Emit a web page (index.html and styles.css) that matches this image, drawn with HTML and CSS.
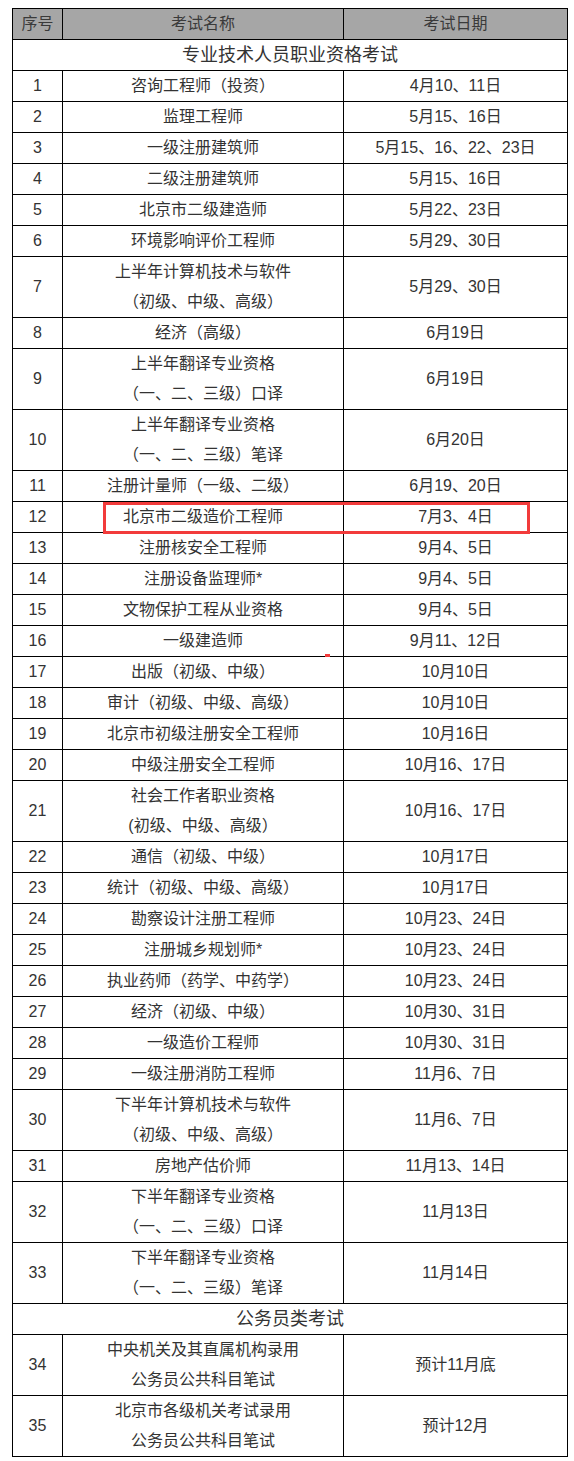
FILE: index.html
```html
<!DOCTYPE html>
<html lang="zh">
<head>
<meta charset="utf-8">
<title>考试日期</title>
<link rel="stylesheet" href="styles.css">
</head>
<body>
<div class="wrap">
<table class="exam">
<colgroup><col class="c1"><col class="c2"><col class="c3"></colgroup>
<thead>
<tr><th>序号</th><th>考试名称</th><th>考试日期</th></tr>
</thead>
<tbody>
<tr class="section"><td colspan="3">专业技术人员职业资格考试</td></tr>
<tr><td>1</td><td>咨询工程师（投资）</td><td>4月10、11日</td></tr>
<tr><td>2</td><td>监理工程师</td><td>5月15、16日</td></tr>
<tr><td>3</td><td>一级注册建筑师</td><td>5月15、16、22、23日</td></tr>
<tr><td>4</td><td>二级注册建筑师</td><td>5月15、16日</td></tr>
<tr><td>5</td><td>北京市二级建造师</td><td>5月22、23日</td></tr>
<tr><td>6</td><td>环境影响评价工程师</td><td>5月29、30日</td></tr>
<tr><td>7</td><td>上半年计算机技术与软件<br>（初级、中级、高级）</td><td>5月29、30日</td></tr>
<tr><td>8</td><td>经济（高级）</td><td>6月19日</td></tr>
<tr><td>9</td><td>上半年翻译专业资格<br>（一、二、三级）口译</td><td>6月19日</td></tr>
<tr><td>10</td><td>上半年翻译专业资格<br>（一、二、三级）笔译</td><td>6月20日</td></tr>
<tr><td>11</td><td>注册计量师（一级、二级）</td><td>6月19、20日</td></tr>
<tr><td>12</td><td>北京市二级造价工程师</td><td>7月3、4日</td></tr>
<tr><td>13</td><td>注册核安全工程师</td><td>9月4、5日</td></tr>
<tr><td>14</td><td>注册设备监理师*</td><td>9月4、5日</td></tr>
<tr><td>15</td><td>文物保护工程从业资格</td><td>9月4、5日</td></tr>
<tr><td>16</td><td>一级建造师</td><td>9月11、12日</td></tr>
<tr><td>17</td><td>出版（初级、中级）</td><td>10月10日</td></tr>
<tr><td>18</td><td>审计（初级、中级、高级）</td><td>10月10日</td></tr>
<tr><td>19</td><td>北京市初级注册安全工程师</td><td>10月16日</td></tr>
<tr><td>20</td><td>中级注册安全工程师</td><td>10月16、17日</td></tr>
<tr><td>21</td><td>社会工作者职业资格<br>(初级、中级、高级）</td><td>10月16、17日</td></tr>
<tr><td>22</td><td>通信（初级、中级）</td><td>10月17日</td></tr>
<tr><td>23</td><td>统计（初级、中级、高级）</td><td>10月17日</td></tr>
<tr><td>24</td><td>勘察设计注册工程师</td><td>10月23、24日</td></tr>
<tr><td>25</td><td>注册城乡规划师*</td><td>10月23、24日</td></tr>
<tr><td>26</td><td>执业药师（药学、中药学）</td><td>10月23、24日</td></tr>
<tr><td>27</td><td>经济（初级、中级）</td><td>10月30、31日</td></tr>
<tr><td>28</td><td>一级造价工程师</td><td>10月30、31日</td></tr>
<tr><td>29</td><td>一级注册消防工程师</td><td>11月6、7日</td></tr>
<tr><td>30</td><td>下半年计算机技术与软件<br>（初级、中级、高级）</td><td>11月6、7日</td></tr>
<tr><td>31</td><td>房地产估价师</td><td>11月13、14日</td></tr>
<tr><td>32</td><td>下半年翻译专业资格<br>（一、二、三级）口译</td><td>11月13日</td></tr>
<tr><td>33</td><td>下半年翻译专业资格<br>（一、二、三级）笔译</td><td>11月14日</td></tr>
<tr class="section"><td colspan="3">公务员类考试</td></tr>
<tr><td>34</td><td>中央机关及其直属机构录用<br>公务员公共科目笔试</td><td>预计11月底</td></tr>
<tr><td>35</td><td>北京市各级机关考试录用<br>公务员公共科目笔试</td><td>预计12月</td></tr>
</tbody>
</table>
<div class="highlight"></div>
<div class="dot"></div>
</div>
</body>
</html>
```
FILE: styles.css
```css
html, body {
  margin: 0;
  padding: 0;
  background: #ffffff;
}
body {
  font-family: "Liberation Sans", "Noto Sans CJK SC", sans-serif;
  color: #333333;
}
.wrap {
  position: relative;
  padding: 8px 0 0 12px;
}
.exam {
  border-collapse: collapse;
  table-layout: fixed;
  width: 555px;
}
.c1 { width: 50px; }
.c2 { width: 281px; }
.c3 { width: 224px; }
.exam th,
.exam td {
  border: 1px solid #000000;
  padding: 0;
  height: 30px;
  line-height: 30px;
  font-size: 16px;
  font-weight: normal;
  text-align: center;
  vertical-align: middle;
}
.exam th {
  background: #a6a6a6;
  color: #3a3a3a;
}
.exam .section td {
  font-size: 18px;
}
.highlight {
  position: absolute;
  left: 103px;
  top: 502px;
  width: 421px;
  height: 26px;
  border: 3px solid #f23b3b;
}
.dot {
  position: absolute;
  left: 325px;
  top: 654px;
  width: 5px;
  height: 3px;
  background: #f23b3b;
}
```
